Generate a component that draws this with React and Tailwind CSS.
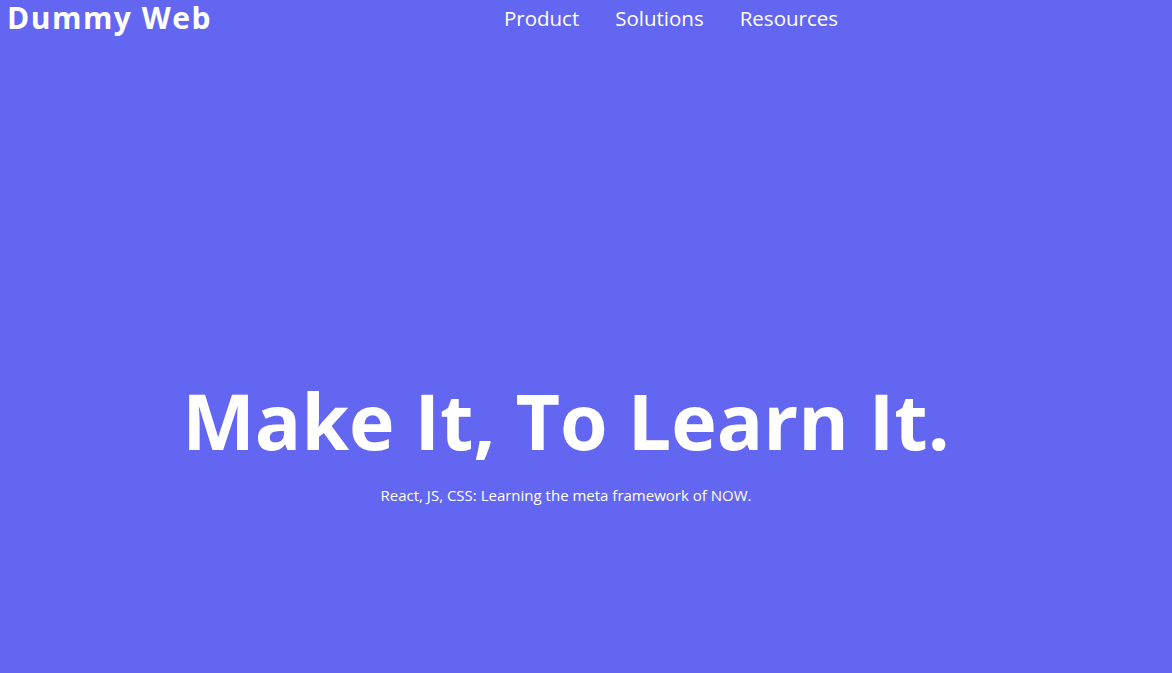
export default function App() {
  return (
    <div className="min-h-screen bg-[#6366f1] text-white" style={{ fontFamily: '"Open Sans", "Noto Sans", sans-serif' }}>
      <header className="flex items-center h-9">
        <div className="pl-[7px] text-[30px] font-bold tracking-wider leading-9">Dummy Web</div>
        <nav className="ml-[292px] flex gap-9 text-[20.5px] leading-9">
          <a>Product</a>
          <a>Solutions</a>
          <a>Resources</a>
        </nav>
      </header>
      <main className="flex flex-col items-center pt-[346px] pr-[40px]">
        <h1 className="text-[77px] font-bold leading-none">Make It, To Learn It.</h1>
        <p className="mt-[25px] text-[15px]">React, JS, CSS: Learning the meta framework of NOW.</p>
      </main>
    </div>
  );
}
